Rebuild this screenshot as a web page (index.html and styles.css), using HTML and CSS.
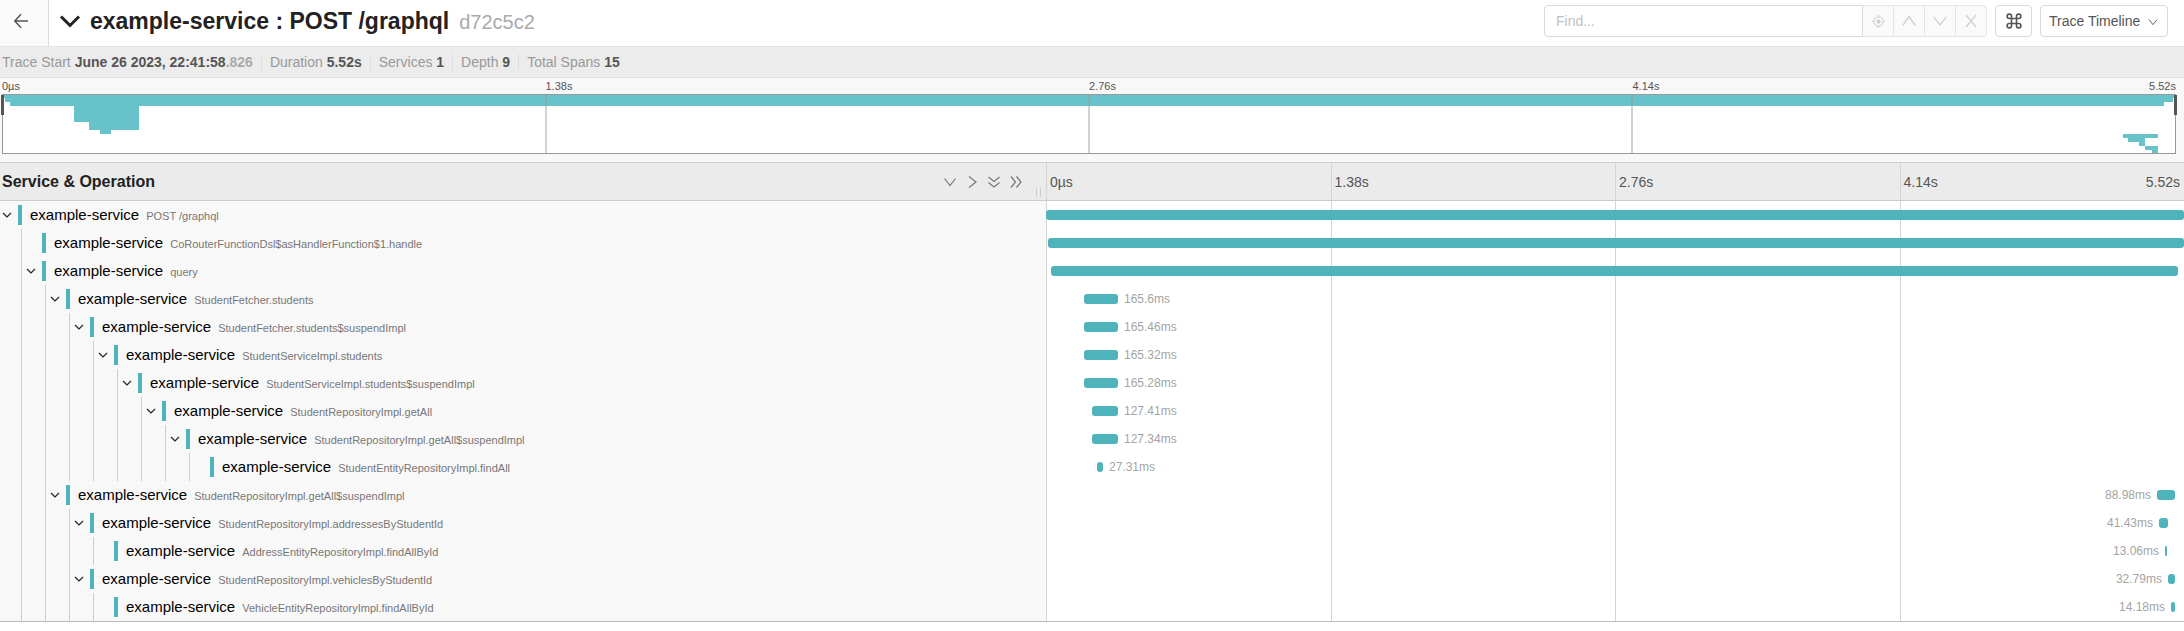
FILE: index.html
```html
<!DOCTYPE html>
<html lang="en">
<head>
<meta charset="utf-8">
<title>example-service : POST /graphql</title>
<link rel="stylesheet" href="styles.css">
</head>
<body>
<svg class="defs" aria-hidden="true">
  <symbol id="down" viewBox="0 0 16 16"><path d="M2.500 4.500l5.500 7 5.500-7"/></symbol>
  <symbol id="up" viewBox="0 0 16 16"><path d="M2.500 12l5.500-8 5.500 8"/></symbol>
  <symbol id="toggle" viewBox="0 0 12 12"><path d="M2 4l4 4 4-4"/></symbol>
</svg>
<header class="page-header">
  <a class="back" href="#" aria-label="Back"><svg class="icon back-icon" width="16" height="16" viewBox="0 0 16 16"><path d="M15 8H1.800M8 1.300L1.800 8 8 14.700"/></svg></a>
  <button class="title" type="button">
    <svg class="title-arrow" width="22" height="22" viewBox="0 0 22 22"><path d="M2 6.500l9 9 9-9"/></svg>
    <h1 class="title-name"><span>example-service : POST /graphql</span> <small class="trace-id">d72c5c2</small></h1>
  </button>
  <div class="search">
    <input class="search-input" type="text" placeholder="Find..." aria-label="Find">
    <button class="search-btn" type="button" disabled aria-label="Locate"><svg class="icon" width="13" height="13" viewBox="0 0 14 14"><circle cx="7" cy="7" r="5"/><circle class="dot" cx="7" cy="7" r="2.300"/><path d="M7 0v2M7 12v2M0 7h2M12 7h2"/></svg></button>
    <button class="search-btn" type="button" disabled aria-label="Previous"><svg class="icon" width="18" height="18"><use href="#up"/></svg></button>
    <button class="search-btn" type="button" disabled aria-label="Next"><svg class="icon" width="18" height="18"><use href="#down"/></svg></button>
    <button class="search-btn" type="button" disabled aria-label="Clear"><svg class="icon" width="16" height="16" viewBox="0 0 16 16"><path d="M3 2l10 12M13 2L3 14"/></svg></button>
  </div>
  <button class="shortcuts" type="button" aria-label="Keyboard shortcuts"><svg class="icon" width="16" height="16" viewBox="0 0 16 16"><path d="M5.500 5.500h5v5h-5zM5.500 5.500V3.300A2.200 2.200 0 1 0 3.300 5.500zM10.500 5.500h2.200a2.200 2.200 0 1 0-2.200-2.200zM10.500 10.500v2.200a2.200 2.200 0 1 0 2.200-2.200zM5.500 10.500H3.300a2.200 2.200 0 1 0 2.200 2.200z"/></svg></button>
  <div class="view">
    <select class="view-select" aria-label="View"><option>Trace Timeline</option></select>
    <svg class="view-arrow icon" width="12" height="12"><use href="#down"/></svg>
  </div>
</header>

<ul class="summary">
  <li class="fact">Trace Start <b>June 26 2023, 22:41:58<span class="millis">.826</span></b></li>
  <li class="fact">Duration <b>5.52s</b></li>
  <li class="fact">Services <b>1</b></li>
  <li class="fact">Depth <b>9</b></li>
  <li class="fact">Total Spans <b>15</b></li>
</ul>

<section class="overview" aria-label="Trace overview">
  <div class="overview-ticks"><span>0µs</span><span>1.38s</span><span>2.76s</span><span class="last-tick"><span>4.14s</span><span>5.52s</span></span></div>
  <div class="minimap">
    <svg class="minimap-graph" viewBox="0 0 2172 58" preserveAspectRatio="none">
      <path d="M0 0h2172v3H0zM2 3h2168v4H2zM7 7h2154v4H7zM71 11h65v16H71zM86 27h50v8H86zM97 35h11v4H97zM2120 39h35v4h-35zM2125 43h17v4h-17zM2136 47h6v4h-6zM2142 51h13v4h-13zM2149 55h6v3h-6z"/>
    </svg>
    <div class="minimap-lines"><i></i><i></i><i></i><i></i></div>
    <span class="handle handle-start"></span>
    <span class="handle handle-end"></span>
  </div>
</section>

<main class="timeline">
  <div class="columns heading">
    <div class="heading-name">
      <h2 class="heading-title">Service &amp; Operation</h2>
      <button class="tool" type="button" aria-label="Expand one level"><svg class="icon" width="16" height="16"><use href="#down"/></svg></button>
      <button class="tool" type="button" aria-label="Collapse one level"><svg class="icon" width="16" height="16" viewBox="0 0 16 16"><path d="M5 2.500l7 5.500-7 5.500"/></svg></button>
      <button class="tool" type="button" aria-label="Expand all"><svg class="icon" width="16" height="16" viewBox="0 0 16 16"><path d="M2.500 3l5.500 4.500L13.500 3M2.500 8.500L8 13l5.500-4.500"/></svg></button>
      <button class="tool" type="button" aria-label="Collapse all"><svg class="icon" width="16" height="16" viewBox="0 0 16 16"><path d="M3 2.500L7.500 8 3 13.500M8.500 2.500L13 8l-4.500 5.500"/></svg></button>
      <span class="grip"></span>
    </div>
    <div class="heading-ticks"><span>0µs</span><span>1.38s</span><span>2.76s</span><span class="last-tick"><span>4.14s</span><span>5.52s</span></span></div>
  </div>
  <div class="rows" id="rows"></div>
</main>
<script src="spans.js"></script>
</body>
</html>
```
FILE: styles.css
```css
* { box-sizing: border-box; }

body {
  margin: 0;
  background: #fff;
  color: #555;
  font: 14px/20px "Liberation Sans", Arial, sans-serif;
}

button, input, select { font: inherit; color: inherit; margin: 0; padding: 0; }
button { border: 0; background: none; }
h1, h2, ul { margin: 0; padding: 0; }
.defs { display: none; }
.icon { display: block; fill: none; stroke: currentColor; stroke-width: 1.2; }

/* Header */
.page-header {
  display: flex;
  align-items: center;
  height: 47px;
  padding-right: 16px;
  border-bottom: 1px solid #e4e4e4;
}
.back {
  display: flex;
  align-items: center;
  justify-content: center;
  align-self: stretch;
  width: 49px;
  padding-right: 6px;
  padding-bottom: 4px;
  border-right: 1px solid #ddd;
  background: #fafafa;
  color: #555;
}
.back-icon { stroke-width: 1.5; }
.title {
  display: flex;
  align-items: center;
  gap: 9px;
  margin-right: auto;
  padding: 0 0 4px 10px;
  color: #222;
}
.title-arrow { fill: none; stroke: currentColor; stroke-width: 3; }
.title-name {
  display: flex;
  align-items: baseline;
  gap: 10px;
  font-size: 23px;
  line-height: 32px;
  font-weight: bold;
}
.trace-id { font-size: 20px; font-weight: normal; color: #aaa; }
.search { display: flex; height: 32px; margin: 0 8px 4px 0; }
.search-input {
  width: 319px;
  padding: 0 11px;
  border: 1px solid #d9d9d9;
  border-radius: 4px 0 0 4px;
  background: #fff;
}
.search-input::placeholder { color: #bfbfbf; }
.search-btn {
  display: flex;
  align-items: center;
  justify-content: center;
  width: 31px;
  border: solid #e6e6e6;
  border-width: 1px 1px 1px 0;
  background: #fafafa;
  color: #d0d0d0;
}
.search-btn:last-child { border-radius: 0 4px 4px 0; }
.dot { fill: currentColor; stroke: none; }
.shortcuts {
  display: flex;
  align-items: center;
  justify-content: center;
  width: 37px;
  height: 32px;
  margin: 0 8px 4px 0;
  border: 1px solid #d9d9d9;
  border-radius: 4px;
}
.shortcuts .icon { stroke-width: 1.6; }
.view { position: relative; margin-bottom: 4px; }
.view-select {
  display: block;
  width: 128px;
  height: 32px;
  padding: 0 8px;
  border: 1px solid #d9d9d9;
  border-radius: 4px;
  background: #fff;
  appearance: none;
}
.view-arrow { position: absolute; right: 9px; top: 11px; pointer-events: none; }

/* Summary */
.summary {
  display: flex;
  height: 31px;
  align-items: center;
  padding-left: 2px;
  background: #ececec;
  border-bottom: 1px solid #e0e0e0;
  color: #999;
  list-style: none;
}
.fact + .fact { margin-left: 8px; padding-left: 8px; border-left: 1px solid #ddd; line-height: 16px; }
.fact b { color: #555; }
.fact .millis { color: #aaa; }

/* Overview */
.overview { padding: 0 8px 8px 2px; background: #f8f8f8; }
.overview-ticks {
  display: grid;
  grid-template-columns: repeat(4, 1fr);
  font-size: 11px;
  line-height: 16px;
}
.last-tick { display: flex; justify-content: space-between; }
.minimap {
  position: relative;
  height: 60px;
  border: 1px solid #999;
  background: #fff;
}
.minimap-graph { position: absolute; inset: 0; width: 100%; height: 100%; fill: #68c2c9; }
.minimap-lines { position: absolute; inset: 0; display: grid; grid-template-columns: repeat(4, 1fr); }
.minimap-lines i { border: solid rgba(153, 153, 153, 0.45); border-width: 0 1px; }
.minimap-lines i:first-child { border-left: 0; }
.minimap-lines i:last-child { border-right: 0; }
.handle { position: absolute; top: 0; width: 3px; height: 20px; background: #555; }
.handle-start { left: -2px; }
.handle-end { right: -2px; }

/* Timeline */
.columns { display: grid; grid-template-columns: 1046fr 1138fr; }
.heading {
  height: 39px;
  border: solid #ccc;
  border-width: 1px 0;
  background: #ebebeb;
}
.heading-name { position: relative; display: flex; align-items: center; gap: 6px; padding: 0 22px 0 2px; }
.heading-title { margin-right: auto; font-size: 16px; color: #222; }
.tool { color: #777; }
.grip {
  position: absolute;
  right: 5px;
  bottom: 3px;
  width: 5px;
  height: 9px;
  border: solid #ccc;
  border-width: 0 1px;
}
.heading-ticks { display: grid; grid-template-columns: repeat(4, 1fr); line-height: 38px; }
.heading-ticks > span { padding: 0 4px 0 3px; border-left: 1px solid #d4d4d4; height: 37px; }
.rows { position: relative; border-bottom: 1px solid #bbb; }
.row { height: 28px; }
.name { display: flex; align-items: center; background: #f8f8f8; }
.guide { align-self: stretch; width: 24px; flex: none; padding-left: 21px; }
.guide::before { content: ""; display: block; width: 1px; height: 100%; background: #ccc; }
.toggle { width: 18px; padding-left: 1px; color: #222; }
.span-name { display: flex; align-items: center; gap: 7px; height: 20px; padding-left: 8px; border-left: 4px solid #4fb3bc; }
.service { font-size: 15px; color: #000; }
.operation { padding-top: 2px; font-size: 11px; color: #777; }
.track { display: flex; align-items: center; gap: 6px; z-index: 1; font-size: 12px; line-height: 22px; color: #a4a4a4; }
.track-end { flex-direction: row-reverse; }
.bar { height: 10px; border-radius: 3px; background: #4fb3bc; flex: none; }
.lines {
  position: absolute;
  inset: 0;
}
.lines-grid { grid-column: 2; display: grid; grid-template-columns: repeat(4, 1fr); }
.lines-grid i { border-left: 1px solid #d4d4d4; }
```
FILE: spans.js
```js
// Each span: depth, has children, operation, start and end (share of the trace), duration label.
const spans = [
  [0, true, "POST /graphql", 0, 1, ""],
  [1, false, "CoRouterFunctionDsl$asHandlerFunction$1.handle", 0.0018, 1, ""],
  [1, true, "query", 0.0044, 0.9947, ""],
  [2, true, "StudentFetcher.students", 0.0334, 0.0633, "165.6ms"],
  [3, true, "StudentFetcher.students$suspendImpl", 0.0334, 0.0633, "165.46ms"],
  [4, true, "StudentServiceImpl.students", 0.0334, 0.0633, "165.32ms"],
  [5, true, "StudentServiceImpl.students$suspendImpl", 0.0334, 0.0633, "165.28ms"],
  [6, true, "StudentRepositoryImpl.getAll", 0.0404, 0.0633, "127.41ms"],
  [7, true, "StudentRepositoryImpl.getAll$suspendImpl", 0.0404, 0.0633, "127.34ms"],
  [8, false, "StudentEntityRepositoryImpl.findAll", 0.0448, 0.0501, "27.31ms"],
  [2, true, "StudentRepositoryImpl.getAll$suspendImpl", 0.9763, 0.9921, "88.98ms"],
  [3, true, "StudentRepositoryImpl.addressesByStudentId", 0.9780, 0.9859, "41.43ms"],
  [4, false, "AddressEntityRepositoryImpl.findAllById", 0.9833, 0.9851, "13.06ms"],
  [3, true, "StudentRepositoryImpl.vehiclesByStudentId", 0.9859, 0.9921, "32.79ms"],
  [4, false, "VehicleEntityRepositoryImpl.findAllById", 0.9886, 0.9921, "14.18ms"]
];

const pct = value => (value * 100).toFixed(2) + "%";

const rowHtml = ([depth, parent, operation, start, end, label]) => {
  const guides = '<span class="guide"></span>'.repeat(depth);
  const toggle = parent
    ? '<button class="toggle" type="button" aria-label="Toggle children"><svg class="icon" width="12" height="12"><use href="#toggle"/></svg></button>'
    : '<span class="toggle"></span>';
  const late = start > 0.5;
  const margin = late ? `margin-right:${pct(1 - end)}` : `margin-left:${pct(start)}`;
  return `<div class="columns">
    <div class="name row">${guides}${toggle}<span class="span-name"><span class="service">example-service</span><span class="operation">${operation}</span></span></div>
    <div class="track row${late ? " track-end" : ""}"><span class="bar" style="width:${pct(end - start)};${margin}"></span><span>${label}</span></div>
  </div>`;
};

document.getElementById("rows").innerHTML =
  '<div class="lines columns"><div class="lines-grid"><i></i><i></i><i></i><i></i></div></div>' +
  spans.map(rowHtml).join("");
```
